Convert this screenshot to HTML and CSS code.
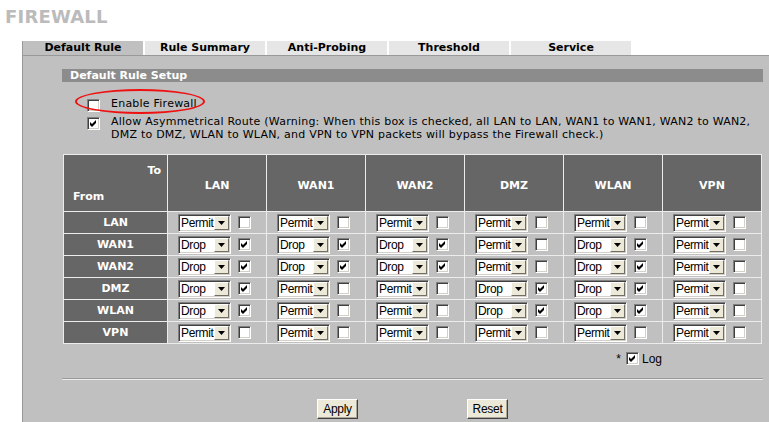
FILE: index.html
```html
<!DOCTYPE html>
<html>
<head>
<meta charset="utf-8">
<title>Firewall</title>
<link rel="stylesheet" href="styles.css">
</head>
<body>
<div class="title">FIREWALL</div>
<div class="tabs">
  <div class="tab active">Default Rule</div>
  <div class="tab">Rule Summary</div>
  <div class="tab">Anti-Probing</div>
  <div class="tab">Threshold</div>
  <div class="tab">Service</div>
</div>
<div class="panel">
  <div class="section-head">Default Rule Setup</div>
  <div class="opt opt-first">
    <span class="cb"></span>
    <span class="opt-text">Enable Firewall</span>
    <span class="ring"></span>
  </div>
  <div class="opt opt-second">
    <span class="cb"><svg width="7" height="7" viewBox="0 0 7 7"><path d="M0 2 L2 4 L6 0 L6 3 L2 7 L0 5 Z" fill="#000"/></svg></span>
    <span class="opt-text">Allow Asymmetrical Route (Warning: When this box is checked, all LAN to LAN, WAN1 to WAN1, WAN2 to WAN2,<br>DMZ to DMZ, WLAN to WLAN, and VPN to VPN packets will bypass the Firewall check.)</span>
  </div>
  <table class="rules" id="rules">
    <colgroup><col class="c-from"><col><col><col><col><col><col></colgroup>
    <thead>
      <tr>
        <th class="corner"><div class="to">To</div><div class="from">From</div></th>
        <th>LAN</th><th>WAN1</th><th>WAN2</th><th>DMZ</th><th>WLAN</th><th>VPN</th>
      </tr>
    </thead>
    <tbody id="rbody"></tbody>
  </table>
  <div class="log"><span class="star">*</span><span class="cb"><svg width="7" height="7" viewBox="0 0 7 7"><path d="M0 2 L2 4 L6 0 L6 3 L2 7 L0 5 Z" fill="#000"/></svg></span><span class="log-text">Log</span></div>
  <div class="sep"></div>
  <div class="buttons"><button class="btn">Apply</button><button class="btn">Reset</button></div>
</div>
<script src="app.js"></script>
</body>
</html>
```

FILE: app.js
```js
(function () {
  var rows = [
    ["LAN",  ["P","P","P","P","P","P"]],
    ["WAN1", ["D","D","D","P","D","P"]],
    ["WAN2", ["D","D","D","P","D","P"]],
    ["DMZ",  ["D","P","P","D","D","P"]],
    ["WLAN", ["D","P","P","D","D","P"]],
    ["VPN",  ["P","P","P","P","P","P"]]
  ];
  var check = '<svg width="7" height="7" viewBox="0 0 7 7"><path d="M0 2 L2 4 L6 0 L6 3 L2 7 L0 5 Z" fill="#000"/></svg>';
  var tri = '<svg width="7" height="4" viewBox="0 0 7 4"><path d="M0 0 H7 L3.5 4 Z" fill="#000"/></svg>';
  var html = "";
  rows.forEach(function (r) {
    html += '<tr><th class="rowh">' + r[0] + '</th>';
    r[1].forEach(function (a) {
      var drop = a === "D";
      html += '<td><div class="cell"><span class="sel"><span class="sel-text">' + (drop ? "Drop" : "Permit") +
        '</span><span class="sel-btn">' + tri + '</span></span><span class="cb">' + (drop ? check : "") + '</span></div></td>';
    });
    html += '</tr>';
  });
  document.getElementById("rbody").innerHTML = html;
})();
```

FILE: styles.css
```css
html, body {
  margin: 0;
  padding: 0;
  background: #fff;
  overflow: hidden;
}
body {
  font-family: "DejaVu Sans", Verdana, sans-serif;
  font-size: 11px;
  color: #000;
}
.title {
  margin: 8px 0 0 5px;
  font-size: 18px;
  line-height: 18px;
  font-weight: bold;
  color: #bbbbbb;
  letter-spacing: 0.2px;
}
.tabs {
  display: flex;
  gap: 2px;
  margin: 15px 0 0 22px;
  height: 14px;
}
.tab {
  width: 120px;
  height: 14px;
  line-height: 14px;
  background: #e6e6e6;
  text-align: center;
  font-weight: bold;
}
.tab.active {
  width: 120px;
  background: #c0c0c0;
  border-left: 1px solid #999;
}
.panel {
  margin-left: 22px;
  background: #c0c0c0;
  border-top: 1px solid #999;
  border-left: 1px solid #999;
  padding: 13px 6px 0 39px;
  height: 367px;
  box-sizing: border-box;
}
.section-head {
  height: 13px;
  line-height: 13px;
  background: #8c8c8c;
  color: #fff;
  font-weight: bold;
  padding-left: 8px;
}
.opt {
  display: flex;
  align-items: flex-start;
  position: relative;
  margin-left: 25px;
  line-height: 13px;
}
.opt-first { margin-top: 15px; }
.opt-second { margin-top: 3px; }
.opt .cb { margin-top: 2px; flex: none; }
.opt-text {
  margin-left: 11px;
  letter-spacing: 0.23px;
  white-space: nowrap;
}
.ring {
  position: absolute;
  left: -12px;
  top: -8px;
  width: 130px;
  height: 25px;
  box-sizing: border-box;
  border: 2.5px solid #ee1111;
  border-radius: 50%;
}
.cb {
  display: inline-flex;
  align-items: center;
  justify-content: center;
  width: 13px;
  height: 13px;
  box-sizing: border-box;
  background: #fff;
  border-top: 1px solid #808080;
  border-left: 1px solid #808080;
  border-bottom: 1px solid #fff;
  border-right: 1px solid #fff;
  box-shadow: inset 1px 1px #404040, inset -1px -1px #d4d0c8;
}
.cb svg { display: block; }
.rules {
  margin: 13px 0 0 1px;
  width: 699px;
  table-layout: fixed;
  border-collapse: separate;
  border-spacing: 1px;
  background: #ececec;
}
.rules col.c-from { width: 103px; }
.rules th, .rules td { padding: 0; }
.rules thead th {
  height: 56px;
  background: #666;
  color: #fff;
  font-weight: bold;
  text-align: center;
  vertical-align: middle;
  box-sizing: border-box;
  padding-top: 4px;
}
.rules thead th.corner {
  padding: 9px 6px 7px 9px;
  vertical-align: top;
  text-align: left;
  line-height: 13px;
}
.corner .to { text-align: right; }
.corner .from { margin-top: 13px; }
.rules .rowh {
  height: 21px;
  background: #666;
  color: #fff;
  font-weight: bold;
  text-align: center;
}
.rules td {
  height: 21px;
  background: #c0c0c0;
}
.cell {
  display: flex;
  align-items: center;
  justify-content: center;
  gap: 7px;
  padding-right: 5px;
}
.sel {
  display: inline-flex;
  align-items: center;
  width: 53px;
  height: 18px;
  box-sizing: border-box;
  background: #fff;
  border-top: 1px solid #808080;
  border-left: 1px solid #808080;
  border-bottom: 1px solid #fff;
  border-right: 1px solid #fff;
  box-shadow: inset 1px 1px #404040, inset -1px -1px #d4d0c8;
  padding: 1px 1px 1px 2px;
}
.sel-text {
  flex: 1;
  font-family: "Liberation Sans", Arial, sans-serif;
  font-size: 12px;
  letter-spacing: -0.35px;
  line-height: 14px;
  color: #000;
  overflow: hidden;
  white-space: nowrap;
}
.sel-btn {
  display: flex;
  align-items: center;
  justify-content: center;
  flex: none;
  width: 15px;
  height: 14px;
  box-sizing: border-box;
  background: #ece9d8;
  border-top: 1px solid #fff;
  border-left: 1px solid #fff;
  border-bottom: 1px solid #716f64;
  border-right: 1px solid #716f64;
}
.sel-btn svg { display: block; }
.log {
  display: flex;
  align-items: center;
  justify-content: flex-end;
  margin-top: 8px;
  padding-right: 101px;
  height: 13px;
  font-family: "Liberation Sans", Arial, sans-serif;
  font-size: 12px;
}
.star { margin-right: 5px; }
.log-text { margin-left: 3px; }
.sep {
  margin-top: 13px;
  border-top: 1px solid #9a9a9a;
  border-bottom: 1px solid #ececec;
}
.buttons {
  display: flex;
  justify-content: center;
  gap: 109px;
  margin-top: 19px;
}
.btn {
  width: 41px;
  height: 20px;
  padding: 0;
  background: #ece9d8;
  border-top: 1px solid #fff;
  border-left: 1px solid #fff;
  border-bottom: 1px solid #404040;
  border-right: 1px solid #404040;
  box-shadow: inset -1px -1px #aca899;
  font-family: "Liberation Sans", Arial, sans-serif;
  font-size: 12px;
  letter-spacing: -0.3px;
  color: #000;
}
```
